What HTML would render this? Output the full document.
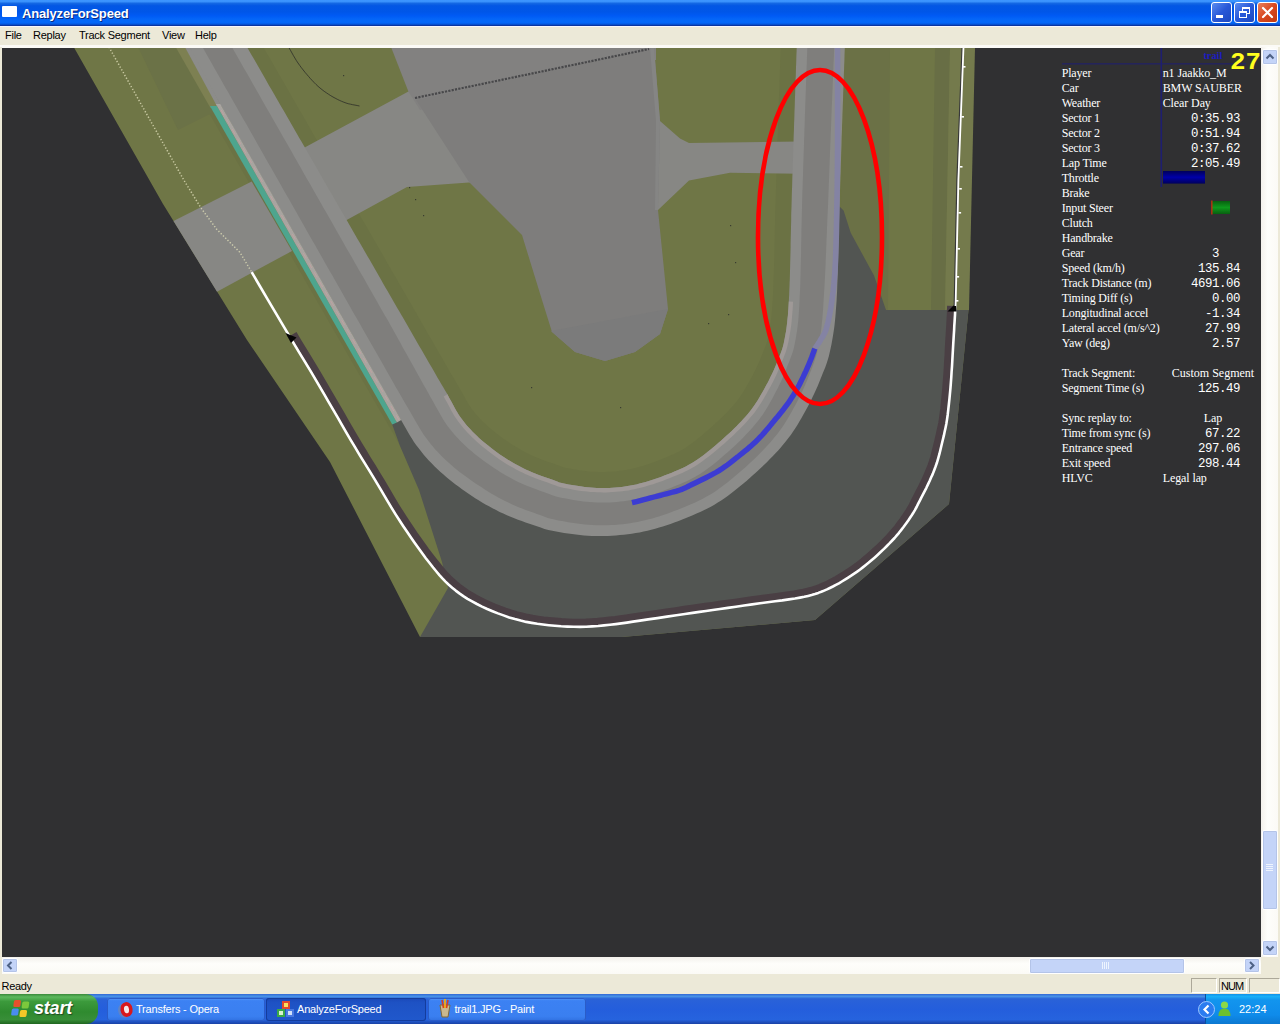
<!DOCTYPE html>
<html><head><meta charset="utf-8"><title>AnalyzeForSpeed</title>
<style>
html,body{margin:0;padding:0;}
body{width:1280px;height:1024px;overflow:hidden;background:#ece9d8;position:relative;font-family:"Liberation Sans",sans-serif;font-size:11px;color:#000;}
div,span{position:absolute;box-sizing:border-box;white-space:nowrap;}
#title{left:0;top:0;width:1280px;height:26px;background:linear-gradient(to bottom,#3d96ff 0%,#3a92fc 6%,#1468e4 13%,#0357e4 22%,#0056e8 45%,#005af4 60%,#0466f8 74%,#0468f8 86%,#0458e0 93%,#0a3aa8 97%,#0a2c94 100%);}
#ticon{left:2px;top:6px;width:15px;height:11px;background:#fff;border-radius:1px;}
#ttext{left:22px;top:5.5px;color:#fff;font-weight:bold;font-size:13px;letter-spacing:-0.17px;text-shadow:1px 1px 0 #0a2a80;}
.tb{top:2px;width:21px;height:21px;border:1px solid #fff;border-radius:3px;background:linear-gradient(135deg,#5a8cf0 0%,#2858d8 50%,#1c48c0 100%);}
#menu{left:0;top:26px;width:1280px;height:22px;background:#ece9d8;border-top:1px solid #f6f6fc;border-bottom:3px solid #fbfaf6;letter-spacing:-0.25px;}
#menu span{top:1.5px;font-size:11px;}
#scene{left:0;top:0;width:1280px;height:1024px;}
.lab{letter-spacing:-0.18px;left:1061.7px;color:#fff;font-family:"Liberation Serif",serif;font-size:12px;line-height:15px;}
.val{letter-spacing:-0.1px;left:1162.7px;color:#fff;font-family:"Liberation Serif",serif;font-size:12px;line-height:15px;}
.num{left:1140px;width:100px;text-align:right;color:#fff;font-family:"Liberation Mono",monospace;font-size:12.4px;letter-spacing:-0.44px;line-height:15px;margin-top:0.6px;}
.ctr{left:1162px;width:102px;text-align:center;color:#fff;font-family:"Liberation Serif",serif;font-size:12px;line-height:15px;}
#vs{left:1261px;top:47px;width:17px;height:910px;background:linear-gradient(to right,#f3f1ec,#fefefb 40%,#fbfaf6);}
#hs{left:2px;top:957px;width:1259px;height:17px;background:linear-gradient(to bottom,#f3f1ec,#fefefb 40%,#fbfaf6);}
.sb{background:#c4d4f8;border:1px solid #fff;border-radius:2px;box-shadow:0 0 0 1px #b4c4e8 inset;}
#status{left:0;top:975px;width:1280px;height:19px;background:#ece9d8;}
.pane{top:3px;height:15px;border:1px solid #aca899;border-right-color:#fff;border-bottom-color:#fff;}
#task{left:0;top:994px;width:1280px;height:30px;background:linear-gradient(to bottom,#3168d5 0%,#4993e6 8%,#2a62d8 16%,#245edc 50%,#2663de 85%,#1941a5 100%);}
.tbtn{letter-spacing:-0.2px;top:4px;height:23px;border-radius:3px;background:linear-gradient(to bottom,#5a9af8 0%,#3c81f3 12%,#3a7ff0 80%,#3070e0 100%);color:#fff;font-size:11px;box-shadow:0 0 0 1px #2a5cc8 inset;}
.tbtn span{top:5px;}
#start{left:0;top:0;width:98px;height:30px;border-radius:0 12px 12px 0;background:linear-gradient(to bottom,#3a8a3a 0%,#5cb85c 10%,#3c9a3c 25%,#2f8a2f 60%,#388e38 85%,#1f661f 100%);}
#start span{left:34px;top:3.5px;color:#fff;font-style:italic;font-weight:bold;font-size:18px;letter-spacing:-0.2px;text-shadow:1px 1px 1px #204a20;}
#tray{left:1205px;top:0;width:75px;height:30px;background:linear-gradient(to bottom,#1290e8 0%,#19b0f8 8%,#1295ee 20%,#0f8bea 70%,#0c78d0 100%);border-left:1px solid #0a50a0;}
</style></head><body>
<div id="scene"><svg width="1280" height="1024" viewBox="0 0 1280 1024" style="position:absolute;left:0;top:0">
<defs><linearGradient id="gth" x1="0" y1="0" x2="0" y2="1"><stop offset="0" stop-color="#00005c"/><stop offset="0.5" stop-color="#0000a8"/><stop offset="1" stop-color="#00005c"/></linearGradient><linearGradient id="ggr" x1="0" y1="0" x2="0" y2="1"><stop offset="0" stop-color="#086010"/><stop offset="0.5" stop-color="#0e9a1c"/><stop offset="1" stop-color="#086010"/></linearGradient><clipPath id="vc"><rect x="2" y="47.5" width="1259" height="909.5"/></clipPath></defs>
<g clip-path="url(#vc)">
<rect x="0" y="40" width="1270" height="925" fill="#303032"/>
<polygon points="73.7,47.0 974.0,47.0 968.5,310.0 949.0,504.0 815.0,620.0 622.0,637.0 420.0,637.0 330.0,462.0 247.0,340.0 163.0,204.0" fill="#6f7646" />
<path d="M187.4 -4.9 L189.3 -1.4 L191.3 2.0 L193.3 5.5 L195.4 9.0 L197.4 12.5 L199.4 15.9 L201.4 19.4 L203.4 22.9 L205.3 26.4 L207.3 29.8 L209.3 33.3 L211.3 36.8 L213.3 40.3 L215.3 43.7 L217.3 47.2 L219.3 50.7 L221.3 54.1 L223.3 57.6 L225.3 61.1 L227.3 64.5 L229.2 68.0 L231.2 71.5 L233.2 75.0 L235.2 78.4 L237.2 81.9 L239.2 85.4 L241.2 88.8 L243.2 92.3 L245.2 95.8 L247.2 99.2 L249.2 102.7 L251.2 106.2 L253.1 109.6 L255.1 113.1 L257.1 116.6 L259.1 120.0 L261.1 123.5 L263.1 127.0 L265.1 130.5 L267.1 133.9 L269.1 137.4 L271.1 140.9 L273.1 144.3 L275.1 147.8 L277.0 151.3 L279.0 154.7 L281.0 158.2 L283.0 161.7 L285.0 165.1 L287.0 168.6 L289.0 172.1 L291.0 175.6 L293.0 179.0 L295.0 182.5 L297.0 186.0 L298.9 189.4 L300.9 192.9 L302.9 196.4 L304.9 199.8 L306.9 203.3 L308.9 206.8 L310.9 210.2 L312.9 213.7 L314.9 217.2 L316.9 220.6 L318.9 224.1 L320.9 227.6 L322.9 231.0 L324.8 234.5 L326.8 238.0 L328.8 241.5 L330.8 244.9 L332.8 248.4 L334.8 251.9 L336.8 255.3 L338.8 258.8 L340.8 262.3 L342.8 265.7 L344.8 269.2 L346.8 272.7 L348.8 276.1 L350.7 279.6 L352.7 283.1 L354.7 286.5 L356.7 290.0 L358.7 293.5 L360.7 296.9 L362.7 300.4 L364.7 303.9 L366.7 307.3 L368.7 310.8 L370.7 314.3 L372.7 317.7 L374.7 321.2 L376.7 324.7 L378.7 328.2 L380.7 331.6 L382.7 335.1 L384.7 338.6 L386.7 342.1 L388.7 345.5 L390.6 349.0 L392.6 352.5 L394.6 356.0 L396.6 359.4 L398.6 362.9 L400.6 366.4 L402.6 369.8 L404.6 373.3 L406.6 376.7 L408.5 380.2 L410.5 383.7 L412.5 387.1 L414.5 390.6 L416.5 394.0 L418.5 397.4 L420.5 400.8 L422.5 404.2 L424.5 407.7 L426.5 411.2 L428.5 414.7 L430.4 418.2 L432.3 421.5 L434.0 424.5 L435.6 427.1 L437.3 429.6 L439.2 432.3 L441.3 435.0 L443.4 437.7 L445.6 440.3 L447.8 442.9 L450.1 445.4 L452.5 447.9 L454.9 450.3 L457.4 452.7 L460.0 455.1 L462.6 457.4 L465.3 459.7 L468.1 462.0 L470.9 464.2 L473.8 466.5 L476.7 468.7 L479.7 470.9 L482.7 473.0 L485.7 475.1 L488.7 477.1 L491.7 479.0 L494.8 480.9 L497.9 482.7 L501.0 484.5 L504.1 486.3 L507.3 488.0 L510.5 489.6 L513.7 491.2 L516.9 492.6 L519.9 494.0 L523.2 495.3 L526.6 496.6 L530.0 497.9 L533.6 499.1 L537.3 500.4 L541.1 501.7 L545.1 503.2 L549.0 504.6 L551.6 505.6 L553.8 506.2 L557.0 506.9 L560.6 507.6 L564.3 508.3 L568.0 508.9 L571.7 509.6 L575.3 510.1 L578.8 510.6 L582.3 511.0 L585.7 511.4 L589.3 511.6 L592.8 511.8 L596.4 512.0 L599.9 512.0 L603.5 512.0 L607.0 512.0 L610.6 511.8 L614.1 511.6 L617.8 511.3 L621.3 511.0 L624.8 510.6 L628.2 510.2 L631.7 509.6 L635.1 509.0 L638.4 508.3 L641.9 507.5 L645.4 506.7 L648.9 505.7 L652.4 504.8 L655.8 503.7 L659.3 502.6 L662.7 501.5 L666.1 500.3 L669.5 499.0 L673.0 497.7 L676.6 496.2 L680.2 494.8 L683.6 493.4 L687.0 491.9 L690.3 490.5 L693.5 489.0 L696.6 487.5 L699.6 485.9 L702.5 484.3 L705.3 482.6 L708.1 480.8 L710.9 478.9 L713.8 476.8 L716.7 474.7 L719.6 472.5 L722.5 470.2 L725.3 467.9 L728.2 465.5 L731.1 463.0 L734.0 460.5 L736.8 458.0 L739.7 455.5 L742.5 452.9 L745.3 450.4 L748.0 447.8 L750.6 445.3 L753.2 442.7 L755.8 440.0 L758.3 437.4 L760.7 434.7 L763.1 432.1 L765.4 429.4 L767.6 426.6 L769.8 423.9 L771.8 421.2 L773.7 418.5 L775.6 415.6 L777.5 412.7 L779.3 409.6 L781.2 406.4 L783.0 403.1 L784.9 399.8 L786.8 396.4 L788.5 393.2 L790.1 390.0 L791.7 386.7 L793.3 383.5 L794.8 380.1 L796.3 376.8 L797.7 373.3 L799.2 369.7 L800.7 366.0 L802.1 362.4 L803.4 359.1 L804.5 356.0 L805.4 353.0 L806.2 350.0 L807.0 346.8 L807.7 343.4 L808.4 339.7 L809.0 336.1 L809.6 332.5 L810.2 328.9 L810.6 325.3 L811.1 321.7 L811.4 318.0 L811.8 314.3 L812.1 310.6 L812.3 306.8 L812.6 303.0 L812.8 299.1 L813.0 295.3 L813.2 291.4 L813.3 287.6 L813.5 283.7 L813.6 279.7 L813.8 275.8 L813.9 271.8 L814.0 267.9 L814.1 263.9 L814.2 260.0 L814.3 256.0 L814.4 252.0 L814.5 248.0 L814.6 244.0 L814.7 240.0 L814.7 236.0 L814.8 232.0 L814.9 228.0 L815.0 224.0 L815.1 220.0 L815.2 215.9 L815.3 211.9 L815.4 207.9 L815.6 203.9 L815.7 199.8 L815.8 195.8 L815.9 191.8 L816.1 187.8 L816.2 183.8 L816.3 179.8 L816.4 175.8 L816.6 171.8 L816.7 167.8 L816.8 163.8 L817.0 159.8 L817.1 155.8 L817.2 151.8 L817.3 147.8 L817.5 143.8 L817.6 139.8 L817.7 135.8 L817.9 131.8 L818.0 127.8 L818.1 123.8 L818.3 119.8 L818.4 115.8 L818.5 111.8 L818.7 107.8 L818.8 103.8 L818.9 99.8 L819.1 95.8 L819.2 91.8 L819.4 87.8 L819.5 83.8 L819.6 79.8 L819.8 75.8 L819.9 71.8 L820.1 67.8 L820.2 63.8 L820.3 59.9 L820.5 55.9 L820.6 51.9 L820.7 47.9 L820.9 43.9 L821.0 39.9 L821.1 36.0 L821.2 32.0 L821.4 28.0 L821.5 24.0 L821.6 20.0 L821.7 16.0 L821.8 12.0 L821.9 8.0" fill="none" stroke="#6b7244" stroke-width="80" stroke-linejoin="round"/>
<polygon points="844.0,47.0 890.0,47.0 888.0,310.0 840.0,310.0" fill="#6b7146" />
<polygon points="935.0,47.0 950.0,47.0 945.0,310.0 931.0,310.0" fill="#686e45" />
<polygon points="950.0,47.0 975.0,47.0 969.0,310.0 945.0,310.0" fill="#747a4c" />
<polygon points="138.0,47.0 176.0,47.0 214.0,112.0 178.0,130.0" fill="#6b7247" />
<polygon points="175.6,47.0 185.0,47.0 217.5,105.0 210.5,108.0" fill="#7d8052" />
<polygon points="173.5,221.0 251.7,181.6 292.0,251.0 217.0,291.7" fill="#878784" />
<polygon points="300.0,150.0 408.4,91.6 430.0,96.0 485.0,185.0 469.0,182.5 407.0,187.0 343.0,222.0" fill="#878784" />
<polygon points="391.0,47.0 656.0,47.0 656.0,60.0 420.0,110.0 408.4,91.6" fill="#828180" />
<polygon points="656.0,118.0 660.0,121.0 680.0,138.4 689.0,143.0 800.0,141.5 800.0,173.8 730.0,172.8 689.0,180.6 658.0,210.0 655.0,200.0" fill="#878784" />
<polygon points="416.0,100.0 649.0,49.0 654.0,47.0 660.0,121.0 658.0,210.0 668.0,309.0 660.0,334.0 635.0,352.0 605.0,361.0 575.0,352.0 552.0,332.0 542.0,300.0 522.0,235.0 469.0,182.0" fill="#7e7d7c" />
<polygon points="654.0,47.0 660.0,121.0 658.0,210.0 655.0,210.0 656.0,121.0 650.0,48.5" fill="#858584" />
<polygon points="551.0,331.0 668.0,309.0 660.0,334.0 635.0,352.0 605.0,361.0 575.0,352.0" fill="#7b7b7b" />
<polygon points="392.0,424.0 400.0,446.0 419.0,490.0 442.0,562.0 448.0,588.0 420.0,637.0 622.0,637.0 815.0,620.0 949.0,504.0 968.5,310.0 886.0,310.0 874.0,275.5 850.7,232.8 843.6,210.5 839.5,206.4 825.0,206.0 820.0,300.0 800.0,380.0 745.0,450.0 660.0,505.0 600.0,512.0 540.0,505.0 480.0,480.0 445.0,445.0 418.0,410.0" fill="#525552" />
<polygon points="165.0,8.0 167.0,11.5 169.0,14.9 171.0,18.4 173.0,21.9 175.0,25.3 177.0,28.8 179.0,32.3 181.0,35.7 183.0,39.2 184.9,42.7 186.9,46.1 188.9,49.6 190.9,53.1 192.9,56.6 194.9,60.0 196.9,63.5 198.9,67.0 200.8,70.4 202.8,73.9 204.8,77.4 206.8,80.9 208.8,84.3 210.8,87.8 212.8,91.3 214.8,94.7 216.7,98.2 218.7,101.7 220.7,105.2 222.7,108.6 224.7,112.1 226.7,115.6 228.7,119.0 230.7,122.5 232.6,126.0 234.6,129.5 236.6,132.9 238.6,136.4 240.6,139.9 242.6,143.3 244.6,146.8 246.6,150.3 248.5,153.8 250.5,157.2 252.5,160.7 254.5,164.2 256.5,167.6 258.5,171.1 260.5,174.6 262.4,178.1 264.4,181.5 266.4,185.0 268.4,188.5 270.4,191.9 272.4,195.4 274.4,198.9 276.4,202.4 278.3,205.8 280.3,209.3 282.3,212.8 284.3,216.2 286.3,219.7 288.3,223.2 290.3,226.7 292.3,230.1 294.2,233.6 296.2,237.1 298.2,240.5 300.2,244.0 302.2,247.5 304.2,251.0 306.2,254.4 308.2,257.9 310.1,261.4 312.1,264.8 314.1,268.3 316.1,271.8 318.1,275.3 320.1,278.7 322.1,282.2 324.1,285.7 326.1,289.1 328.0,292.6 330.0,296.1 332.0,299.5 334.0,303.0 336.0,306.5 338.0,310.0 340.0,313.4 342.0,316.9 344.0,320.4 345.9,323.8 347.9,327.3 349.9,330.8 351.9,334.3 353.9,337.7 355.9,341.2 357.9,344.7 359.9,348.1 361.8,351.6 363.8,355.1 365.8,358.6 367.8,362.0 369.8,365.5 371.7,369.0 373.7,372.5 375.7,375.9 377.7,379.4 379.7,382.9 381.6,386.4 383.6,389.8 385.6,393.3 387.6,396.8 389.6,400.3 391.6,403.7 393.6,407.2 395.6,410.7 397.6,414.1 399.6,417.6 401.6,421.0 403.6,424.5 405.6,427.9 407.6,431.4 409.6,434.9 411.7,438.3 413.8,441.7 416.1,444.9 418.5,448.1 421.0,451.3 423.5,454.4 426.1,457.4 428.8,460.4 431.6,463.3 434.4,466.2 437.3,468.9 440.2,471.7 443.2,474.3 446.2,476.9 449.3,479.5 452.4,482.0 455.6,484.4 458.8,486.8 462.0,489.2 465.3,491.5 468.6,493.7 471.9,496.0 475.2,498.2 478.6,500.3 482.1,502.4 485.5,504.4 489.0,506.3 492.5,508.2 496.1,510.1 499.6,511.9 503.3,513.6 506.9,515.2 510.6,516.8 514.3,518.3 518.0,519.7 521.8,521.0 525.6,522.4 529.4,523.7 533.2,524.9 536.9,526.2 540.7,527.6 544.5,528.9 548.3,529.9 552.3,530.7 556.2,531.5 560.1,532.2 564.1,532.9 568.0,533.5 572.0,534.1 575.9,534.6 579.9,535.1 583.9,535.4 587.9,535.7 591.9,535.9 595.9,536.0 599.9,536.0 603.9,536.0 607.9,535.9 611.9,535.7 615.9,535.5 619.8,535.1 623.8,534.8 627.8,534.3 631.8,533.8 635.7,533.1 639.6,532.4 643.6,531.6 647.5,530.7 651.3,529.7 655.2,528.7 659.1,527.6 662.9,526.4 666.7,525.2 670.5,523.9 674.3,522.6 678.0,521.2 681.7,519.7 685.4,518.2 689.1,516.7 692.8,515.2 696.5,513.6 700.2,512.0 703.8,510.3 707.4,508.5 710.9,506.7 714.4,504.7 717.8,502.6 721.2,500.5 724.5,498.2 727.7,495.9 730.9,493.5 734.1,491.0 737.2,488.5 740.3,486.0 743.4,483.5 746.5,480.9 749.5,478.2 752.5,475.6 755.4,472.9 758.4,470.2 761.3,467.5 764.2,464.8 767.1,462.0 769.9,459.1 772.7,456.3 775.5,453.3 778.2,450.4 780.8,447.4 783.4,444.3 785.9,441.3 788.4,438.1 790.8,434.9 793.1,431.6 795.3,428.3 797.4,424.9 799.4,421.5 801.5,418.0 803.4,414.5 805.4,411.0 807.3,407.5 809.2,404.0 811.0,400.4 812.7,396.8 814.4,393.2 816.1,389.6 817.7,385.9 819.2,382.2 820.7,378.5 822.2,374.8 823.7,371.1 825.2,367.4 826.6,363.6 827.8,359.8 828.9,355.9 829.8,352.1 830.7,348.1 831.5,344.2 832.2,340.3 832.9,336.3 833.5,332.4 834.1,328.4 834.6,324.5 835.0,320.5 835.4,316.5 835.7,312.5 836.0,308.5 836.3,304.5 836.6,300.6 836.8,296.6 837.0,292.6 837.2,288.6 837.3,284.6 837.5,280.6 837.6,276.6 837.8,272.6 837.9,268.6 838.0,264.6 838.1,260.6 838.2,256.6 838.3,252.6 838.4,248.6 838.5,244.6 838.6,240.6 838.7,236.6 838.8,232.6 838.9,228.6 839.0,224.6 839.1,220.6 839.2,216.6 839.3,212.6 839.4,208.6 839.5,204.6 839.7,200.6 839.8,196.6 839.9,192.6 840.1,188.6 840.2,184.6 840.3,180.6 840.4,176.6 840.6,172.6 840.7,168.6 840.8,164.6 841.0,160.6 841.1,156.6 841.2,152.6 841.4,148.6 841.5,144.6 841.6,140.6 841.7,136.6 841.9,132.6 842.0,128.6 842.1,124.6 842.3,120.6 842.4,116.7 842.5,112.7 842.7,108.7 842.8,104.7 843.0,100.7 843.1,96.7 843.2,92.7 843.4,88.7 843.5,84.7 843.7,80.7 843.8,76.7 843.9,72.7 844.1,68.7 844.2,64.7 844.4,60.7 844.5,56.7 844.6,52.7 844.8,48.7 844.9,44.7 845.0,40.7 845.2,36.7 845.3,32.7 845.4,28.7 845.5,24.7 845.6,20.7 845.7,16.7 845.9,12.7 846.0,8.7 797.9,7.3 797.8,11.3 797.7,15.3 797.6,19.3 797.4,23.3 797.3,27.3 797.2,31.3 797.1,35.2 797.0,39.2 796.8,43.1 796.7,47.1 796.6,51.1 796.4,55.0 796.3,59.0 796.2,63.0 796.0,67.0 795.9,71.0 795.8,75.0 795.6,79.0 795.5,83.0 795.3,87.0 795.2,91.0 795.1,95.0 794.9,99.0 794.8,103.0 794.7,107.0 794.5,111.0 794.4,115.0 794.3,119.0 794.1,123.0 794.0,127.0 793.9,131.0 793.7,135.1 793.6,139.1 793.5,143.1 793.3,147.1 793.2,151.1 793.1,155.1 793.0,159.1 792.8,163.1 792.7,167.1 792.6,171.1 792.4,175.1 792.3,179.1 792.2,183.1 792.1,187.1 791.9,191.1 791.8,195.1 791.7,199.1 791.6,203.1 791.5,207.2 791.3,211.2 791.2,215.3 791.2,219.3 791.1,223.4 791.0,227.4 790.9,231.4 790.8,235.4 790.7,239.4 790.6,243.4 790.6,247.4 790.5,251.4 790.4,255.4 790.3,259.3 790.2,263.3 790.1,267.2 790.0,271.1 789.9,275.0 789.8,278.9 789.6,282.7 789.5,286.5 789.3,290.3 789.2,294.1 789.0,297.7 788.8,301.4 788.6,305.0 788.4,308.6 788.1,312.1 787.9,315.6 787.5,319.0 787.2,322.3 786.8,325.5 786.4,328.7 785.9,331.9 785.3,335.2 784.7,338.6 784.1,341.6 783.6,344.0 783.0,346.2 782.4,348.4 781.5,350.9 780.5,353.8 779.1,357.2 777.6,361.0 776.2,364.5 774.9,367.6 773.5,370.7 772.1,373.7 770.7,376.6 769.3,379.5 767.8,382.4 766.2,385.3 764.5,388.5 762.7,391.8 760.9,394.8 759.2,397.7 757.6,400.4 755.9,403.0 754.4,405.3 752.8,407.6 751.2,409.8 749.4,412.0 747.4,414.4 745.4,416.7 743.3,419.1 741.1,421.5 738.8,423.8 736.5,426.2 734.1,428.6 731.7,430.9 729.2,433.3 726.6,435.6 723.9,438.0 721.2,440.5 718.5,442.8 715.7,445.2 713.0,447.5 710.3,449.7 707.7,451.8 705.0,453.9 702.4,455.9 699.9,457.8 697.4,459.5 695.1,461.1 692.8,462.5 690.6,463.8 688.3,465.1 685.8,466.4 683.2,467.7 680.4,469.0 677.5,470.3 674.4,471.5 671.2,472.9 667.8,474.2 664.3,475.6 660.9,476.9 657.9,478.0 654.9,479.1 651.9,480.1 648.8,481.0 645.7,481.9 642.6,482.8 639.5,483.6 636.4,484.4 633.3,485.0 630.5,485.6 627.6,486.1 624.7,486.6 621.8,486.9 618.8,487.3 615.7,487.6 612.4,487.8 609.2,488.0 606.1,488.1 603.1,488.1 600.0,488.0 596.9,488.0 593.8,487.8 590.6,487.6 587.6,487.3 584.7,487.0 581.8,486.6 578.6,486.1 575.3,485.6 572.0,485.0 568.5,484.4 565.1,483.7 561.8,483.0 559.3,482.4 558.7,482.2 557.2,481.6 553.3,480.1 549.0,478.6 545.2,477.2 541.6,475.9 538.2,474.7 535.1,473.5 532.0,472.3 529.3,471.1 526.8,470.0 524.2,468.7 521.4,467.3 518.6,465.8 515.7,464.3 513.0,462.7 510.2,461.1 507.5,459.5 504.9,457.8 502.2,456.0 499.5,454.2 496.8,452.2 494.1,450.2 491.5,448.2 488.8,446.1 486.2,444.1 483.7,442.0 481.3,439.9 479.0,437.9 476.8,435.8 474.7,433.8 472.6,431.7 470.6,429.6 468.7,427.5 466.8,425.4 465.0,423.2 463.3,421.0 461.6,418.8 459.9,416.4 458.4,414.3 457.4,412.6 456.3,410.8 454.9,408.2 453.2,405.0 451.3,401.5 449.3,397.9 447.4,394.3 445.4,390.9 443.4,387.5 441.4,384.2 439.4,380.8 437.4,377.4 435.5,374.0 433.5,370.5 431.5,367.1 429.5,363.7 427.5,360.2 425.5,356.8 423.5,353.3 421.5,349.8 419.5,346.4 417.5,342.9 415.5,339.4 413.5,336.0 411.5,332.5 409.5,329.0 407.5,325.6 405.5,322.1 403.5,318.6 401.4,315.1 399.4,311.6 397.4,308.2 395.4,304.7 393.4,301.2 391.4,297.8 389.4,294.3 387.4,290.8 385.4,287.4 383.4,283.9 381.5,280.4 379.5,277.0 377.5,273.5 375.5,270.0 373.5,266.6 371.5,263.1 369.5,259.6 367.5,256.2 365.5,252.7 363.5,249.3 361.5,245.8 359.5,242.3 357.5,238.9 355.5,235.4 353.5,231.9 351.5,228.5 349.5,225.0 347.5,221.5 345.5,218.1 343.5,214.6 341.5,211.2 339.5,207.7 337.5,204.2 335.5,200.8 333.5,197.3 331.5,193.8 329.5,190.4 327.5,186.9 325.5,183.4 323.5,180.0 321.5,176.5 319.5,173.0 317.6,169.6 315.6,166.1 313.6,162.6 311.6,159.2 309.6,155.7 307.6,152.2 305.6,148.8 303.6,145.3 301.6,141.8 299.6,138.4 297.6,134.9 295.6,131.4 293.6,128.0 291.6,124.5 289.6,121.0 287.6,117.6 285.6,114.1 283.6,110.6 281.6,107.2 279.6,103.7 277.6,100.2 275.6,96.8 273.6,93.3 271.6,89.8 269.6,86.4 267.6,82.9 265.7,79.4 263.7,76.0 261.7,72.5 259.7,69.0 257.7,65.6 255.7,62.1 253.7,58.6 251.7,55.2 249.7,51.7 247.7,48.2 245.7,44.8 243.7,41.3 241.7,37.8 239.7,34.4 237.7,30.9 235.7,27.4 233.7,24.0 231.7,20.5 229.7,17.0 227.7,13.5 225.7,10.1 223.7,6.6 221.7,3.1 219.7,-0.4 217.7,-3.9 215.7,-7.4 213.7,-10.9 211.7,-14.3 209.7,-17.7" fill="#8c8c8a" />
<polygon points="443.7,396.5 445.6,400.0 447.6,403.6 449.5,407.1 451.2,410.4 452.7,413.0 453.8,415.0 454.9,416.8 456.5,419.0 458.2,421.5 460.0,423.8 461.8,426.1 463.6,428.3 465.6,430.5 467.6,432.7 469.7,434.8 471.8,437.0 474.0,439.1 476.3,441.2 478.6,443.3 481.1,445.4 483.6,447.5 486.3,449.6 489.0,451.7 491.7,453.8 494.4,455.8 497.1,457.7 499.9,459.7 502.6,461.4 505.3,463.2 508.1,464.9 510.9,466.5 513.7,468.1 516.6,469.7 519.5,471.2 522.4,472.6 525.1,473.9 527.7,475.1 530.5,476.3 533.6,477.5 536.8,478.7 540.2,480.0 543.8,481.3 547.6,482.6 551.9,484.2 555.8,485.6 557.4,486.3 558.3,486.6 560.9,487.2 564.3,487.9 567.8,488.6 571.3,489.2 574.7,489.9 578.0,490.4 581.2,490.9 584.2,491.3 587.2,491.6 590.4,491.9 593.6,492.1 596.8,492.2 600.0,492.3 603.1,492.4 606.3,492.4 609.5,492.3 612.7,492.1 616.1,491.8 619.2,491.6 622.4,491.2 625.4,490.8 628.3,490.4 631.3,489.8 634.3,489.2 637.4,488.5 640.6,487.8 643.8,486.9 646.9,486.1 650.0,485.1 653.2,484.2 656.3,483.1 659.4,482.1 662.5,480.9 665.9,479.6 669.4,478.2 672.8,476.8 676.1,475.5 679.2,474.2 682.2,472.9 685.1,471.6 687.8,470.2 690.3,468.9 692.8,467.6 695.1,466.2 697.4,464.7 699.9,463.0 702.4,461.3 705.0,459.3 707.7,457.3 710.4,455.2 713.1,453.0 715.8,450.7 718.5,448.4 721.3,446.1 724.1,443.7 726.8,441.2 729.5,438.8 732.1,436.4 734.7,434.0 737.1,431.6 739.6,429.2 741.9,426.8 744.2,424.4 746.5,421.9 748.6,419.5 750.7,417.1 752.7,414.7 754.6,412.4 756.3,410.1 757.9,407.8 759.5,405.3 761.2,402.7 762.9,399.9 764.6,397.0 766.4,393.9 768.2,390.6 770.0,387.4 771.7,384.3 773.2,381.4 774.6,378.5 776.1,375.5 777.4,372.5 778.8,369.3 780.2,366.1 781.6,362.6 783.1,358.9 784.4,355.4 785.6,352.4 786.4,349.8 787.1,347.4 787.7,345.1 788.3,342.5 788.9,339.5 789.5,336.0 790.1,332.6 790.6,329.4 791.1,326.1 791.5,322.8 791.8,319.5 792.1,316.0 792.4,312.5 792.7,309.0 792.9,305.3 793.1,301.7 788.8,301.4 788.6,305.0 788.4,308.6 788.1,312.1 787.9,315.6 787.5,319.0 787.2,322.3 786.8,325.5 786.4,328.7 785.9,331.9 785.3,335.2 784.7,338.6 784.1,341.6 783.6,344.0 783.0,346.2 782.4,348.4 781.5,350.9 780.5,353.8 779.1,357.2 777.6,361.0 776.2,364.5 774.9,367.6 773.5,370.7 772.1,373.7 770.7,376.6 769.3,379.5 767.8,382.4 766.2,385.3 764.5,388.5 762.7,391.8 760.9,394.8 759.2,397.7 757.6,400.4 755.9,403.0 754.4,405.3 752.8,407.6 751.2,409.8 749.4,412.0 747.4,414.4 745.4,416.7 743.3,419.1 741.1,421.5 738.8,423.8 736.5,426.2 734.1,428.6 731.7,430.9 729.2,433.3 726.6,435.6 723.9,438.0 721.2,440.5 718.5,442.8 715.7,445.2 713.0,447.5 710.3,449.7 707.7,451.8 705.0,453.9 702.4,455.9 699.9,457.8 697.4,459.5 695.1,461.1 692.8,462.5 690.6,463.8 688.3,465.1 685.8,466.4 683.2,467.7 680.4,469.0 677.5,470.3 674.4,471.5 671.2,472.9 667.8,474.2 664.3,475.6 660.9,476.9 657.9,478.0 654.9,479.1 651.9,480.1 648.8,481.0 645.7,481.9 642.6,482.8 639.5,483.6 636.4,484.4 633.3,485.0 630.5,485.6 627.6,486.1 624.7,486.6 621.8,486.9 618.8,487.3 615.7,487.6 612.4,487.8 609.2,488.0 606.1,488.1 603.1,488.1 600.0,488.0 596.9,488.0 593.8,487.8 590.6,487.6 587.6,487.3 584.7,487.0 581.8,486.6 578.6,486.1 575.3,485.6 572.0,485.0 568.5,484.4 565.1,483.7 561.8,483.0 559.3,482.4 558.7,482.2 557.2,481.6 553.3,480.1 549.0,478.6 545.2,477.2 541.6,475.9 538.2,474.7 535.1,473.5 532.0,472.3 529.3,471.1 526.8,470.0 524.2,468.7 521.4,467.3 518.6,465.8 515.7,464.3 513.0,462.7 510.2,461.1 507.5,459.5 504.9,457.8 502.2,456.0 499.5,454.2 496.8,452.2 494.1,450.2 491.5,448.2 488.8,446.1 486.2,444.1 483.7,442.0 481.3,439.9 479.0,437.9 476.8,435.8 474.7,433.8 472.6,431.7 470.6,429.6 468.7,427.5 466.8,425.4 465.0,423.2 463.3,421.0 461.6,418.8 459.9,416.4 458.4,414.3 457.4,412.6 456.3,410.8 454.9,408.2 453.2,405.0 451.3,401.5 449.3,397.9 447.4,394.3" fill="#9f9997" />
<polygon points="176.3,1.5 178.3,5.0 180.2,8.4 182.3,11.9 184.3,15.4 186.3,18.8 188.3,22.3 190.3,25.8 192.2,29.3 194.2,32.7 196.2,36.2 198.2,39.7 200.2,43.2 202.2,46.6 204.2,50.1 206.1,53.6 208.1,57.1 210.1,60.5 212.1,64.0 214.0,67.5 216.0,71.0 218.0,74.4 220.0,77.9 222.0,81.4 223.9,84.9 225.9,88.4 227.9,91.8 229.9,95.3 231.8,98.8 233.8,102.3 235.8,105.7 237.8,109.2 239.7,112.7 241.7,116.2 243.7,119.7 245.7,123.1 247.7,126.6 249.6,130.1 251.6,133.6 253.6,137.0 255.6,140.5 257.5,144.0 259.5,147.5 261.5,151.0 263.5,154.4 265.4,157.9 267.4,161.4 269.4,164.9 271.4,168.3 273.3,171.8 275.3,175.3 277.3,178.8 279.3,182.3 281.3,185.7 283.2,189.2 285.2,192.7 287.2,196.2 289.2,199.6 291.1,203.1 293.1,206.6 295.1,210.1 297.1,213.6 299.0,217.0 301.0,220.5 303.0,224.0 305.0,227.5 306.9,230.9 308.9,234.4 310.9,237.9 312.9,241.4 314.9,244.8 316.8,248.3 318.8,251.8 320.8,255.3 322.8,258.7 324.7,262.2 326.7,265.7 328.7,269.2 330.7,272.7 332.7,276.1 334.6,279.6 336.6,283.1 338.6,286.6 340.6,290.0 342.6,293.5 344.5,297.0 346.5,300.5 348.5,303.9 350.5,307.4 352.4,310.9 354.4,314.4 356.4,317.8 358.4,321.3 360.4,324.8 362.3,328.3 364.3,331.8 366.3,335.2 368.3,338.7 370.3,342.2 372.3,345.7 374.2,349.1 376.2,352.6 378.2,356.1 380.2,359.6 382.2,363.0 384.2,366.5 386.1,370.0 388.1,373.5 390.1,376.9 392.1,380.4 394.1,383.9 396.0,387.4 398.0,390.8 400.0,394.3 402.0,397.7 404.0,401.2 406.0,404.7 408.0,408.1 410.0,411.5 412.0,415.0 414.0,418.4 416.0,421.9 418.1,425.4 420.0,428.7 422.0,431.9 423.9,434.9 426.0,437.8 428.2,440.8 430.5,443.7 432.9,446.6 435.3,449.4 437.8,452.1 440.4,454.8 443.0,457.4 445.7,460.0 448.5,462.6 451.3,465.1 454.1,467.5 457.1,469.9 460.0,472.2 463.1,474.5 466.2,476.8 469.3,479.1 472.4,481.3 475.6,483.4 478.8,485.6 482.0,487.6 485.2,489.7 488.4,491.7 491.6,493.7 494.9,495.6 498.2,497.4 501.6,499.2 505.0,501.0 508.4,502.6 511.7,504.2 515.1,505.7 518.6,507.2 522.1,508.6 525.7,509.9 529.4,511.2 533.1,512.6 536.9,513.9 540.8,515.3 544.6,516.7 547.8,518.0 550.9,518.8 554.5,519.6 558.3,520.4 562.1,521.1 565.9,521.8 569.7,522.5 573.5,523.1 577.3,523.6 581.0,524.1 584.7,524.5 588.5,524.8 592.3,525.0 596.1,525.2 599.9,525.3 603.7,525.3 607.5,525.2 611.3,525.1 615.1,524.9 618.9,524.6 622.7,524.2 626.5,523.7 630.2,523.2 633.9,522.6 637.6,521.9 641.3,521.1 645.0,520.3 648.7,519.3 652.4,518.4 656.1,517.3 659.7,516.2 663.3,515.0 667.0,513.8 670.5,512.5 674.1,511.1 677.8,509.7 681.4,508.2 685.1,506.7 688.6,505.3 692.2,503.7 695.7,502.2 699.1,500.5 702.4,498.9 705.7,497.1 708.9,495.3 712.1,493.4 715.2,491.4 718.2,489.3 721.3,487.1 724.3,484.8 727.4,482.4 730.4,480.0 733.4,477.6 736.3,475.1 739.3,472.6 742.2,470.0 745.2,467.4 748.1,464.8 751.0,462.1 753.8,459.5 756.6,456.8 759.3,454.1 762.0,451.3 764.6,448.5 767.2,445.7 769.8,442.9 772.3,440.0 774.7,437.1 777.1,434.2 779.3,431.2 781.5,428.2 783.6,425.2 785.6,422.1 787.6,418.8 789.5,415.6 791.4,412.2 793.2,408.8 795.1,405.4 797.0,401.9 798.7,398.5 800.4,395.1 802.1,391.7 803.7,388.2 805.2,384.7 806.7,381.2 808.2,377.6 809.6,374.0 811.1,370.2 812.5,366.6 813.8,363.1 815.0,359.6 816.1,356.2 817.0,352.8 817.8,349.3 818.5,345.6 819.2,341.8 819.9,338.1 820.5,334.3 821.1,330.6 821.5,326.8 821.9,323.0 822.3,319.2 822.6,315.3 822.9,311.5 823.2,307.6 823.4,303.7 823.6,299.8 823.9,295.9 824.1,292.0 824.4,288.0 824.6,284.1 824.8,280.1 825.0,276.2 825.2,272.2 825.4,268.2 825.6,264.2 825.7,260.3 825.9,256.3 826.1,252.3 826.2,248.3 826.4,244.3 826.5,240.3 826.7,236.3 826.9,232.3 827.0,228.3 827.2,224.3 827.3,220.3 827.5,216.3 827.7,212.3 827.9,208.3 828.1,204.2 828.2,200.2 828.4,196.2 828.5,192.2 828.7,188.2 828.8,184.2 829.0,180.3 829.1,176.3 829.3,172.3 829.4,168.3 829.6,164.3 829.7,160.3 829.9,156.3 830.0,152.3 830.2,148.3 830.3,144.3 830.5,140.3 830.6,136.3 830.8,132.3 831.0,128.3 831.1,124.3 831.3,120.3 831.4,116.3 831.6,112.3 831.7,108.3 831.9,104.3 832.1,100.3 832.2,96.3 832.4,92.3 832.6,88.3 832.7,84.3 832.9,80.3 833.1,76.3 833.2,72.3 833.4,68.3 833.5,64.3 833.7,60.3 833.9,56.3 834.0,52.3 834.2,48.3 834.3,44.4 834.4,40.4 834.6,36.4 834.7,32.4 834.8,28.4 834.9,24.4 835.0,20.4 835.2,16.4 835.3,12.4 835.4,8.4 808.5,7.6 808.4,11.6 808.3,15.6 808.1,19.6 808.0,23.6 807.9,27.6 807.8,31.6 807.7,35.5 807.6,39.5 807.4,43.5 807.3,47.4 807.2,51.4 807.0,55.4 806.9,59.4 806.8,63.4 806.6,67.4 806.5,71.4 806.3,75.4 806.2,79.3 806.0,83.3 805.9,87.3 805.8,91.3 805.6,95.4 805.5,99.4 805.3,103.4 805.2,107.4 805.1,111.4 804.9,115.4 804.8,119.4 804.7,123.4 804.5,127.4 804.4,131.4 804.3,135.4 804.1,139.4 804.0,143.4 803.9,147.4 803.7,151.4 803.6,155.4 803.5,159.4 803.3,163.4 803.2,167.4 803.1,171.4 803.0,175.4 802.8,179.4 802.7,183.4 802.6,187.4 802.4,191.4 802.3,195.4 802.2,199.4 802.1,203.4 802.0,207.5 801.9,211.5 801.8,215.6 801.7,219.6 801.6,223.7 801.5,227.7 801.4,231.7 801.4,235.7 801.3,239.7 801.2,243.7 801.1,247.7 801.1,251.7 801.0,255.6 800.9,259.6 800.8,263.6 800.7,267.5 800.6,271.4 800.5,275.4 800.4,279.3 800.3,283.2 800.2,287.0 800.0,290.8 799.8,294.6 799.6,298.3 799.5,302.1 799.3,305.8 799.1,309.5 798.8,313.1 798.6,316.7 798.3,320.2 797.9,323.7 797.5,327.1 797.1,330.4 796.5,333.8 796.0,337.3 795.3,340.8 794.7,344.0 794.1,346.8 793.5,349.4 792.7,352.0 791.8,354.7 790.6,357.8 789.3,361.4 787.8,365.1 786.4,368.7 785.1,372.0 783.8,375.3 782.4,378.4 781.0,381.6 779.5,384.6 778.0,387.7 776.4,390.8 774.7,394.1 772.9,397.5 771.1,400.7 769.4,403.7 767.7,406.7 766.0,409.5 764.4,412.1 762.7,414.7 760.9,417.1 759.0,419.7 756.9,422.3 754.8,424.8 752.6,427.4 750.3,430.0 748.0,432.6 745.5,435.1 743.1,437.7 740.6,440.2 738.0,442.7 735.4,445.2 732.7,447.7 729.9,450.2 727.1,452.7 724.3,455.1 721.5,457.5 718.8,459.9 716.0,462.2 713.2,464.4 710.5,466.5 707.8,468.6 705.1,470.5 702.5,472.3 700.0,474.0 697.4,475.5 694.8,477.0 692.0,478.5 689.1,480.0 686.1,481.4 683.0,482.8 679.8,484.2 676.4,485.6 672.9,487.0 669.4,488.5 665.9,489.8 662.7,491.1 659.5,492.2 656.2,493.4 652.9,494.4 649.7,495.4 646.4,496.4 643.0,497.3 639.7,498.1 636.4,498.9 633.2,499.6 630.0,500.2 626.8,500.7 623.6,501.2 620.3,501.6 616.9,501.9 613.5,502.2 610.0,502.5 606.7,502.6 603.3,502.6 599.9,502.5 596.6,502.4 593.2,502.3 589.8,502.1 586.5,501.8 583.2,501.4 580.0,501.0 576.6,500.5 573.1,499.9 569.6,499.3 566.0,498.6 562.5,497.9 558.9,497.2 556.0,496.5 554.5,496.1 552.3,495.2 548.5,493.8 544.3,492.3 540.5,490.9 536.9,489.6 533.4,488.3 530.1,487.1 526.8,485.8 523.8,484.5 521.0,483.3 518.1,481.9 515.1,480.4 512.0,478.8 509.0,477.1 506.0,475.4 503.0,473.7 500.1,471.9 497.2,470.1 494.4,468.3 491.5,466.3 488.6,464.3 485.7,462.3 482.9,460.2 480.0,458.0 477.3,455.9 474.5,453.7 471.9,451.6 469.4,449.4 466.9,447.2 464.5,445.0 462.2,442.7 459.9,440.4 457.7,438.1 455.5,435.8 453.5,433.4 451.5,431.0 449.5,428.5 447.5,425.9 445.8,423.5 444.3,421.3 442.9,419.0 441.3,416.2 439.5,412.9 437.5,409.4 435.5,405.9 433.6,402.4 431.6,398.9 429.6,395.5 427.7,392.1 425.8,388.6 423.8,385.2 421.9,381.7 420.0,378.3 418.0,374.8 416.1,371.3 414.2,367.8 412.2,364.3 410.3,360.8 408.3,357.3 406.4,353.8 404.5,350.4 402.5,346.9 400.6,343.3 398.6,339.8 396.7,336.3 394.7,332.8 392.8,329.3 390.8,325.8 388.9,322.3 386.9,318.8 384.9,315.4 382.9,311.9 380.9,308.4 378.9,304.9 377.0,301.5 375.0,298.0 373.0,294.5 371.0,291.0 369.0,287.6 367.0,284.1 365.1,280.6 363.1,277.1 361.1,273.7 359.1,270.2 357.1,266.7 355.1,263.2 353.2,259.8 351.2,256.3 349.2,252.8 347.2,249.4 345.2,245.9 343.3,242.4 341.3,238.9 339.3,235.5 337.3,232.0 335.3,228.5 333.4,225.0 331.4,221.6 329.4,218.1 327.4,214.6 325.4,211.1 323.4,207.7 321.5,204.2 319.5,200.7 317.5,197.2 315.5,193.8 313.5,190.3 311.6,186.8 309.6,183.3 307.6,179.9 305.6,176.4 303.6,172.9 301.7,169.4 299.7,166.0 297.7,162.5 295.7,159.0 293.7,155.5 291.8,152.1 289.8,148.6 287.8,145.1 285.8,141.6 283.8,138.2 281.9,134.7 279.9,131.2 277.9,127.7 275.9,124.3 273.9,120.8 271.9,117.3 270.0,113.8 268.0,110.4 266.0,106.9 264.0,103.4 262.0,99.9 260.1,96.5 258.1,93.0 256.1,89.5 254.1,86.0 252.1,82.6 250.2,79.1 248.2,75.6 246.2,72.1 244.2,68.7 242.2,65.2 240.3,61.7 238.3,58.2 236.3,54.8 234.3,51.3 232.3,47.8 230.3,44.3 228.4,40.9 226.4,37.4 224.4,33.9 222.4,30.4 220.4,27.0 218.4,23.5 216.4,20.0 214.5,16.5 212.5,13.1 210.5,9.6 208.5,6.1 206.5,2.6 204.4,-0.9 202.4,-4.4 200.4,-7.8 198.5,-11.3" fill="#7f7e7c" />
<polygon points="184.3,46.0 189.0,46.0 221.4,106.0 216.9,106.0" fill="#8c8c8a" />
<polygon points="209.9,106.0 216.9,106.0 396.9,422.5 392.3,424.5" fill="#4ea58e" />
<polygon points="215.8,104.0 220.3,104.0 401.2,420.0 396.9,422.5" fill="#a8a4a0" />
<path d="M221.2 110.0 L399.0 420.0" fill="none" stroke="#c8a0a0" stroke-width="1" stroke-dasharray="6 5" opacity="0.8"/>
<path d="M293.4 333.9 L298.7 342.8 L303.2 350.2 L307.2 356.6 L311.1 363.0 L315.2 369.8 L319.6 377.3 L324.0 384.8 L328.3 392.3 L332.7 399.9 L337.1 407.4 L341.5 414.9 L345.8 422.5 L350.2 430.0 L354.6 437.5 L358.9 444.8 L363.4 452.2 L367.8 459.5 L372.3 466.7 L376.6 473.8 L380.8 480.7 L384.8 487.4 L388.6 493.8 L392.2 500.0 L395.8 506.0 L399.5 512.0 L403.2 517.8 L407.0 523.5 L410.7 529.1 L414.4 534.5 L418.2 539.8 L421.9 545.1 L425.7 550.4 L429.5 555.4 L433.2 560.2 L436.7 564.6 L439.9 568.5 L442.9 572.1 L445.8 575.3 L448.7 578.3 L451.9 581.3 L455.2 584.2 L458.6 587.0 L462.1 589.7 L465.8 592.3 L469.9 594.8 L474.3 597.4 L479.0 599.9 L484.0 602.4 L489.1 604.8 L494.3 607.0 L499.6 609.1 L505.0 611.1 L510.6 613.0 L516.2 614.7 L521.7 616.1 L527.1 617.4 L532.5 618.4 L537.9 619.2 L543.5 620.0 L549.2 620.6 L555.2 621.2 L561.4 621.7 L567.7 622.0 L573.9 622.3 L580.0 622.3 L585.9 622.2 L591.8 621.8 L597.7 621.4 L603.6 620.8 L609.5 620.2 L615.2 619.6 L620.6 618.8 L626.2 618.0 L632.4 617.1 L639.3 616.0 L647.5 614.9 L656.7 613.5 L666.3 612.1 L675.7 610.7 L684.3 609.4 L691.9 608.4 L698.8 607.4 L705.5 606.4 L712.2 605.5 L719.4 604.4 L727.1 603.3 L735.2 602.2 L743.5 601.0 L751.6 599.8 L759.4 598.7 L767.0 597.7 L774.5 596.7 L781.7 595.8 L788.4 594.9 L794.2 594.0 L799.2 593.1 L803.4 592.3 L807.0 591.4 L810.4 590.6 L813.7 589.6 L816.8 588.6 L819.7 587.5 L822.4 586.4 L825.1 585.2 L827.9 583.9 L830.8 582.4 L833.7 580.9 L836.6 579.3 L839.5 577.6 L842.4 575.8 L845.4 574.0 L848.3 572.1 L851.2 570.1 L854.1 568.1 L857.1 566.0 L860.0 563.8 L862.9 561.5 L865.8 559.0 L868.8 556.5 L871.7 554.0 L874.7 551.3 L877.8 548.5 L880.8 545.6 L883.7 542.8 L886.4 540.0 L888.9 537.4 L891.1 534.9 L893.3 532.4 L895.5 529.9 L897.7 527.1 L900.0 524.0 L902.4 520.8 L904.8 517.4 L907.0 514.1 L909.1 510.9 L910.9 507.9 L912.5 504.9 L914.0 501.8 L915.6 498.7 L917.2 495.5 L918.9 492.2 L920.6 489.0 L922.2 485.7 L923.9 482.5 L925.4 479.1 L926.9 475.7 L928.4 472.3 L929.8 468.8 L931.2 465.2 L932.5 461.4 L933.8 457.2 L935.0 452.5 L936.2 447.7 L937.4 443.0 L938.4 438.5 L939.4 434.4 L940.2 430.6 L941.0 427.0 L941.8 423.2 L942.5 418.9 L943.1 414.1 L943.8 408.9 L944.3 403.5 L944.9 398.0 L945.4 392.6 L945.9 387.3 L946.3 382.0 L946.7 376.7 L947.1 371.4 L947.4 366.1 L947.7 360.7 L948.1 355.3 L948.3 349.8 L948.6 344.6 L948.9 339.5 L949.2 334.7 L949.5 330.0 L949.8 325.5 L950.0 321.4 L950.2 317.8 L950.4 314.8 L950.5 312.3 L950.5 310.2 L950.6 308.1 L950.7 305.8" fill="none" stroke="#4a3f44" stroke-width="7.2" stroke-linejoin="round"/>
<path d="M251.7 272.2 L259.5 285.5 L267.5 299.2 L275.5 312.7 L282.9 325.2 L289.4 336.2 L294.8 345.2 L299.3 352.6 L303.3 359.1 L307.1 365.4 L311.2 372.2 L315.6 379.6 L320.0 387.1 L324.4 394.6 L328.7 402.2 L333.1 409.7 L337.5 417.2 L341.9 424.8 L346.2 432.3 L350.6 439.8 L355.0 447.2 L359.4 454.6 L363.9 461.9 L368.4 469.1 L372.7 476.2 L376.9 483.1 L380.8 489.7 L384.6 496.1 L388.3 502.3 L391.9 508.4 L395.6 514.4 L399.4 520.3 L403.1 526.0 L406.9 531.6 L410.6 537.1 L414.4 542.5 L418.2 547.8 L422.0 553.1 L425.8 558.2 L429.6 563.0 L433.1 567.5 L436.4 571.5 L439.4 575.1 L442.4 578.4 L445.5 581.6 L448.8 584.7 L452.2 587.7 L455.7 590.6 L459.4 593.4 L463.3 596.1 L467.5 598.8 L472.1 601.4 L476.9 604.0 L482.0 606.6 L487.2 609.0 L492.5 611.2 L497.9 613.4 L503.5 615.4 L509.2 617.4 L514.9 619.1 L520.6 620.6 L526.2 621.9 L531.7 622.9 L537.3 623.8 L542.9 624.5 L548.8 625.2 L554.8 625.8 L561.1 626.3 L567.4 626.6 L573.8 626.8 L580.0 626.9 L586.1 626.8 L592.1 626.4 L598.1 626.0 L604.0 625.4 L610.0 624.8 L615.8 624.1 L621.3 623.4 L626.9 622.6 L633.0 621.6 L640.0 620.6 L648.2 619.4 L657.4 618.1 L667.0 616.6 L676.4 615.3 L685.0 614.0 L692.6 612.9 L699.5 611.9 L706.1 611.0 L712.8 610.0 L720.0 609.0 L727.8 607.9 L735.9 606.7 L744.1 605.5 L752.2 604.4 L760.0 603.3 L767.6 602.3 L775.1 601.3 L782.3 600.4 L789.0 599.4 L795.0 598.5 L800.0 597.6 L804.3 596.8 L808.1 595.9 L811.6 595.0 L815.0 594.0 L818.3 592.9 L821.3 591.8 L824.2 590.6 L827.0 589.4 L829.9 588.0 L832.9 586.5 L835.9 584.9 L838.9 583.3 L841.9 581.5 L844.9 579.7 L847.8 577.8 L850.8 575.9 L853.8 573.9 L856.8 571.9 L859.8 569.7 L862.8 567.4 L865.8 565.0 L868.8 562.6 L871.8 560.0 L874.8 557.4 L877.8 554.7 L880.9 551.8 L884.0 548.9 L886.9 546.0 L889.7 543.2 L892.2 540.5 L894.6 538.0 L896.8 535.4 L899.0 532.8 L901.3 529.9 L903.7 526.8 L906.1 523.5 L908.6 520.0 L910.9 516.6 L913.0 513.3 L914.9 510.1 L916.6 507.0 L918.1 503.9 L919.7 500.8 L921.3 497.6 L923.0 494.4 L924.7 491.1 L926.4 487.8 L928.0 484.4 L929.6 481.0 L931.1 477.5 L932.7 474.1 L934.1 470.5 L935.5 466.8 L936.9 462.8 L938.2 458.4 L939.5 453.7 L940.7 448.8 L941.8 444.0 L942.9 439.5 L943.9 435.4 L944.7 431.6 L945.5 427.9 L946.3 424.0 L947.0 419.6 L947.7 414.7 L948.3 409.4 L948.9 404.0 L949.5 398.4 L950.0 393.0 L950.5 387.7 L950.9 382.4 L951.3 377.0 L951.6 371.7 L952.0 366.4 L952.3 361.0 L952.6 355.5 L952.9 350.1 L953.2 344.8 L953.5 339.8 L953.8 335.0 L954.1 330.3 L954.3 325.8 L954.6 321.7 L954.8 318.0 L955.0 315.0 L955.1 312.5 L955.1 310.3 L955.2 308.2 L955.3 306.0" fill="none" stroke="#ffffff" stroke-width="2.6" stroke-linejoin="round"/>
<polygon points="285.5,333.0 296.5,337.5 291.0,343.0" fill="#050505" />
<polygon points="947.5,311.5 956.0,303.0 956.5,311.5" fill="#050505" />
<path d="M962.2 47.0 L957.0 180.0 L954.3 306.0" fill="none" stroke="#38383a" stroke-width="1.4" />
<path d="M963.5 47.0 L958.4 180.0 L955.6 306.0" fill="none" stroke="#ffffff" stroke-width="1.8" />
<rect x="962.9" y="66" width="2.6" height="1.6" fill="#fff"/>
<rect x="961.4" y="116" width="2.6" height="1.6" fill="#fff"/>
<rect x="959.9" y="166" width="2.6" height="1.6" fill="#fff"/>
<rect x="959.2" y="188" width="2.6" height="1.6" fill="#fff"/>
<rect x="958.5" y="212" width="2.6" height="1.6" fill="#fff"/>
<rect x="957.4" y="248" width="2.6" height="1.6" fill="#fff"/>
<rect x="956.5" y="276" width="2.6" height="1.6" fill="#fff"/>
<rect x="955.8" y="300" width="2.6" height="1.6" fill="#fff"/>
<path d="M108.9 47.0 L183.8 180.0 L201.0 208.0 L216.5 229.0 L240.0 252.5 L251.7 272.2" fill="none" stroke="#deddb8" stroke-width="1.5" stroke-dasharray="1.3 1.9" opacity="0.8"/>
<path d="M415.0 98.0 L649.0 49.0" fill="none" stroke="#48484a" stroke-width="2.2" stroke-dasharray="2.2 1.2"/>
<path d="M289.0 47.8 L290.5 50.4 L291.9 52.9 L293.4 55.5 L294.9 58.1 L296.4 60.6 L298.0 63.0 L299.7 65.4 L301.4 67.7 L303.2 70.0 L305.0 72.3 L306.9 74.5 L308.7 76.6 L310.5 78.7 L312.4 80.7 L314.2 82.6 L316.1 84.5 L318.0 86.3 L320.0 88.0 L322.1 89.7 L324.2 91.3 L326.4 92.8 L328.6 94.3 L330.8 95.7 L333.0 97.0 L335.2 98.2 L337.3 99.3 L339.5 100.4 L341.6 101.3 L343.8 102.2 L346.0 103.0 L348.2 103.7 L350.5 104.2 L352.7 104.7 L355.0 105.1 L357.2 105.5 L359.5 106.0" fill="none" stroke="#2a2c28" stroke-width="0.9" opacity="0.85"/>
<rect x="343" y="75" width="1.2" height="1.2" fill="#3a3c30"/>
<rect x="409" y="187" width="1.2" height="1.2" fill="#3a3c30"/>
<rect x="415" y="199" width="1.2" height="1.2" fill="#3a3c30"/>
<rect x="423" y="215" width="1.2" height="1.2" fill="#3a3c30"/>
<rect x="599" y="43" width="1.2" height="1.2" fill="#3a3c30"/>
<rect x="730" y="225" width="1.2" height="1.2" fill="#3a3c30"/>
<rect x="735" y="262" width="1.2" height="1.2" fill="#3a3c30"/>
<rect x="728" y="314" width="1.2" height="1.2" fill="#3a3c30"/>
<rect x="531" y="387" width="1.2" height="1.2" fill="#3a3c30"/>
<rect x="620" y="407" width="1.2" height="1.2" fill="#3a3c30"/>
<rect x="708" y="323" width="1.2" height="1.2" fill="#3a3c30"/>
<path d="M837.6 40.0 L837.6 50.1 L837.6 60.5 L837.6 70.9 L837.6 81.2 L837.6 91.5 L837.6 101.4 L837.6 111.0 L837.6 120.0 L837.6 128.3 L837.6 135.9 L837.6 143.1 L837.6 150.0 L837.5 156.9 L837.5 164.1 L837.4 171.7 L837.3 180.0 L837.2 189.3 L837.0 199.5 L836.8 210.3 L836.6 221.2 L836.4 232.1 L836.1 242.3 L835.8 251.8 L835.5 260.0 L835.2 267.0 L834.8 273.1 L834.4 278.5 L834.0 283.2 L833.5 287.6 L833.1 291.8 L832.5 295.8 L832.0 300.0 L831.4 304.2 L830.8 308.2 L830.1 312.1 L829.4 315.8 L828.7 319.2 L828.0 322.4 L827.2 325.3 L826.5 328.0 L825.8 330.3 L825.0 332.2 L824.3 333.8 L823.5 335.2 L822.8 336.5 L822.0 337.6 L821.2 338.8 L820.5 340.0 L819.8 341.2 L819.1 342.4 L818.3 343.5 L817.6 344.5 L816.9 345.5 L816.2 346.5 L815.5 347.5 L814.8 348.6" fill="none" stroke="#8483a3" stroke-width="5.6" />
<path d="M632.0 502.7 L635.6 501.8 L639.4 500.8 L643.1 499.8 L646.9 498.9 L650.5 497.9 L654.1 497.0 L657.5 496.1 L660.6 495.3 L663.5 494.5 L666.3 493.8 L668.9 493.2 L671.3 492.5 L673.7 491.9 L675.9 491.3 L678.0 490.7 L680.0 490.0 L681.7 489.4 L683.1 488.8 L684.3 488.3 L685.5 487.8 L686.7 487.2 L688.0 486.5 L689.7 485.6 L691.9 484.5 L694.6 483.2 L697.7 481.7 L701.2 480.0 L704.9 478.2 L708.6 476.3 L712.3 474.4 L715.8 472.5 L719.0 470.6 L721.9 468.7 L724.7 466.8 L727.5 464.9 L730.1 462.9 L732.6 460.9 L735.1 458.9 L737.6 457.0 L740.0 455.0 L742.4 453.1 L744.8 451.2 L747.1 449.3 L749.3 447.4 L751.5 445.5 L753.7 443.5 L755.9 441.5 L758.0 439.4 L760.1 437.2 L762.2 435.0 L764.3 432.6 L766.3 430.3 L768.3 427.9 L770.2 425.6 L772.1 423.2 L774.0 421.0 L775.8 418.8 L777.6 416.7 L779.4 414.5 L781.1 412.4 L782.8 410.3 L784.4 408.2 L785.9 406.2 L787.4 404.2 L788.8 402.2 L790.1 400.3 L791.3 398.4 L792.5 396.5 L793.7 394.7 L794.8 392.8 L795.9 390.9 L797.0 389.0 L798.1 387.0 L799.2 385.0 L800.2 383.0 L801.2 380.9 L802.2 378.9 L803.2 376.9 L804.1 374.9 L805.0 373.0 L805.9 371.1 L806.7 369.3 L807.5 367.4 L808.3 365.7 L809.0 363.9 L809.7 362.2 L810.4 360.6 L811.0 359.0 L811.6 357.5 L812.1 356.1 L812.6 354.8 L813.0 353.6 L813.5 352.3 L813.9 351.1 L814.3 349.9 L814.8 348.6" fill="none" stroke="#3c3cd2" stroke-width="5.4" />
<ellipse cx="820" cy="237" rx="62" ry="167" fill="none" stroke="#ff0000" stroke-width="4.6"/>
<!-- info panel graphics -->
<rect x="1160.5" y="47" width="1.6" height="140" fill="#1e1e70"/>
<rect x="1062" y="63" width="184" height="1.6" fill="#1e1e70" opacity="0.65"/>
<rect x="1163" y="171" width="42" height="12.6" fill="url(#gth)"/>
<rect x="1212" y="201" width="18" height="13" fill="url(#ggr)"/>
<rect x="1211.2" y="200.5" width="1.3" height="14" fill="#c83010"/>
<text x="1203.4" y="58.6" font-family="Liberation Serif, serif" font-weight="bold" font-size="11" fill="#1c1cc0" textLength="19" lengthAdjust="spacingAndGlyphs">trail</text>
<text x="1230" y="69" font-family="Liberation Mono, monospace" font-weight="bold" font-size="24" fill="#ffff1e" textLength="31" lengthAdjust="spacingAndGlyphs">27</text>
</g></svg></div>

<div id="title"><div id="ticon"></div><span id="ttext">AnalyzeForSpeed</span>
<div class="tb" style="left:1211px"><div style="left:4px;top:12px;width:7px;height:3px;background:#fff"></div></div>
<div class="tb" style="left:1234px"><div style="left:7px;top:4px;width:8px;height:7px;border:1px solid #fff;border-top-width:2px"></div><div style="left:4px;top:8px;width:8px;height:7px;border:1px solid #fff;border-top-width:2px;background:#2858d8"></div></div>
<div class="tb" style="left:1257px;background:linear-gradient(135deg,#e8805c 0%,#d84820 50%,#c03810 100%)"><svg width="19" height="19" style="position:absolute;left:0;top:0"><path d="M5 5 L14 14 M14 5 L5 14" stroke="#fff" stroke-width="2.2" stroke-linecap="round"/></svg></div>
</div>
<div id="menu"><span style="left:5px">File</span><span style="left:33px">Replay</span><span style="left:79px">Track Segment</span><span style="left:162px">View</span><span style="left:195px">Help</span></div>
<div style="left:0;top:47px;width:2px;height:928px;background:#ece9d8"></div>

<span class="lab" style="top:66px">Player</span>
<span class="val" style="top:66px">n1 Jaakko_M</span>
<span class="lab" style="top:81px">Car</span>
<span class="val" style="top:81px">BMW SAUBER</span>
<span class="lab" style="top:96px">Weather</span>
<span class="val" style="top:96px">Clear Day</span>
<span class="lab" style="top:111px">Sector 1</span>
<span class="num" style="top:111px">0:35.93</span>
<span class="lab" style="top:126px">Sector 2</span>
<span class="num" style="top:126px">0:51.94</span>
<span class="lab" style="top:141px">Sector 3</span>
<span class="num" style="top:141px">0:37.62</span>
<span class="lab" style="top:156px">Lap Time</span>
<span class="num" style="top:156px">2:05.49</span>
<span class="lab" style="top:171px">Throttle</span>
<span class="lab" style="top:186px">Brake</span>
<span class="lab" style="top:201px">Input Steer</span>
<span class="lab" style="top:216px">Clutch</span>
<span class="lab" style="top:231px">Handbrake</span>
<span class="lab" style="top:246px">Gear</span>
<span class="num" style="top:246px">3&nbsp;&nbsp;&nbsp;</span>
<span class="lab" style="top:261px">Speed (km/h)</span>
<span class="num" style="top:261px">135.84</span>
<span class="lab" style="top:276px">Track Distance (m)</span>
<span class="num" style="top:276px">4691.06</span>
<span class="lab" style="top:291px">Timing Diff (s)</span>
<span class="num" style="top:291px">0.00</span>
<span class="lab" style="top:306px">Longitudinal accel</span>
<span class="num" style="top:306px">-1.34</span>
<span class="lab" style="top:321px">Lateral accel (m/s^2)</span>
<span class="num" style="top:321px">27.99</span>
<span class="lab" style="top:336px">Yaw (deg)</span>
<span class="num" style="top:336px">2.57</span>
<span class="lab" style="top:366px">Track Segment:</span>
<span class="ctr" style="top:366px">Custom Segment</span>
<span class="lab" style="top:381px">Segment Time (s)</span>
<span class="num" style="top:381px">125.49</span>
<span class="lab" style="top:411px">Sync replay to:</span>
<span class="ctr" style="top:411px">Lap</span>
<span class="lab" style="top:426px">Time from sync (s)</span>
<span class="num" style="top:426px">67.22</span>
<span class="lab" style="top:441px">Entrance speed</span>
<span class="num" style="top:441px">297.06</span>
<span class="lab" style="top:456px">Exit speed</span>
<span class="num" style="top:456px">298.44</span>
<span class="lab" style="top:471px">HLVC</span>
<span class="val" style="top:471px">Legal lap</span>

<div id="vs"><div class="sb" style="left:1px;top:1.5px;width:16px;height:16px"><svg width="14" height="14" style="position:absolute;left:0;top:0"><path d="M3.5 8.5 L7 5 L10.5 8.5" fill="none" stroke="#4d6185" stroke-width="2"/></svg></div>
<div class="sb" style="left:1px;top:783px;width:15.5px;height:79.5px"><div style="left:3px;top:33px;width:7px;height:1px;background:#eef4fe;box-shadow:0 2px 0 #eef4fe,0 4px 0 #eef4fe,0 6px 0 #eef4fe"></div></div>
<div class="sb" style="left:1px;top:892.8px;width:16px;height:16px"><svg width="14" height="14" style="position:absolute;left:0;top:0"><path d="M3.5 5.5 L7 9 L10.5 5.5" fill="none" stroke="#4d6185" stroke-width="2"/></svg></div></div>
<div id="hs"><div class="sb" style="left:0px;top:1.2px;width:16px;height:15.3px"><svg width="14" height="13" style="position:absolute;left:0;top:0"><path d="M8.5 3 L5 6.5 L8.5 10" fill="none" stroke="#4d6185" stroke-width="2"/></svg></div>
<div class="sb" style="left:1027px;top:1px;width:156px;height:15.6px"><div style="left:72px;top:3px;width:1px;height:7px;background:#eef4fe;box-shadow:2px 0 0 #eef4fe,4px 0 0 #eef4fe,6px 0 0 #eef4fe"></div></div>
<div class="sb" style="left:1242.2px;top:1.2px;width:16px;height:15.3px"><svg width="14" height="13" style="position:absolute;left:0;top:0"><path d="M5 3 L8.5 6.5 L5 10" fill="none" stroke="#4d6185" stroke-width="2"/></svg></div></div>
<div style="left:1261px;top:957px;width:19px;height:18px;background:#ece9d8"></div>
<div style="left:1278px;top:47px;width:2px;height:928px;background:#ece9d8"></div>
<div id="status"><span style="left:1.5px;top:5px;font-size:11px;letter-spacing:-0.3px">Ready</span>
<div class="pane" style="left:1191px;width:26px"></div><div class="pane" style="left:1219px;width:28px"><span style="left:1px;top:1px;font-size:11px;letter-spacing:-0.9px">NUM</span></div><div class="pane" style="left:1249px;width:31px"></div></div>
<div id="task">
<div id="start"><svg width="30" height="30" style="position:absolute;left:6px;top:0"><g transform="skewX(-8)"><rect x="9" y="6" width="7" height="7" rx="1.5" fill="#e8502c"/><rect x="17.5" y="7.5" width="7" height="7" rx="1.5" fill="#7cc83c"/><rect x="8" y="14.5" width="7" height="7" rx="1.5" fill="#4a8cf0"/><rect x="16.5" y="16" width="7" height="7" rx="1.5" fill="#f4c828"/></g></svg><span>start</span></div>
<div class="tbtn" style="left:107px;width:158px"><svg width="20" height="18" style="position:absolute;left:9px;top:3px"><ellipse cx="8" cy="9.5" rx="4.6" ry="6" fill="none" stroke="#7c86a8" stroke-width="2.6" opacity=".55" transform="rotate(-8 8 9.5)"/><ellipse cx="10.5" cy="8.5" rx="4.3" ry="5.6" fill="#f4e8e8" stroke="#d8181c" stroke-width="3.6" transform="rotate(-8 10.5 8.5)"/></svg><span style="left:29px">Transfers - Opera</span></div>
<div class="tbtn" style="left:266px;width:160px;background:linear-gradient(to bottom,#1a48b8 0%,#1e52c4 20%,#2058cc 100%);box-shadow:0 0 0 1px #143c9c inset"><svg width="20" height="20" style="position:absolute;left:10px;top:1px"><rect x="6" y="2" width="8" height="8" fill="#e04830"/><rect x="1" y="10" width="8" height="8" fill="#38a848"/><rect x="10" y="10" width="8" height="8" fill="#4878e0"/><rect x="8" y="4" width="4" height="4" fill="#f8e060"/><rect x="3" y="12" width="4" height="4" fill="#d8f0d0"/><rect x="12" y="12" width="4" height="4" fill="#d0e0f8"/></svg><span style="left:31px">AnalyzeForSpeed</span></div>
<div class="tbtn" style="left:427.5px;width:158px"><svg width="18" height="20" style="position:absolute;left:9px;top:1px"><path d="M3 6 L13 6 L11 18 L5 18 Z" fill="#c8b890" stroke="#806838" stroke-width="1"/><path d="M5 1 L6.5 9 M8 0 L8 9 M11 1 L9.5 9" stroke="#d84020" stroke-width="1.6"/><path d="M8 0 L8 9" stroke="#e8c020" stroke-width="1.6"/></svg><span style="left:27px">trail1.JPG - Paint</span></div>
<div id="tray"><svg width="75" height="30" style="position:absolute;left:-9px;top:0;overflow:visible"><circle cx="9.5" cy="15.5" r="8" fill="#2a7cf0" stroke="#9cc8ff" stroke-width="1"/><path d="M11.5 11.5 L7.5 15.5 L11.5 19.5" fill="none" stroke="#fff" stroke-width="2.2"/><circle cx="27.5" cy="11" r="3.6" fill="#8cd848"/><path d="M21.5 22 Q21.5 14.5 27.5 14.5 Q33.5 14.5 33.5 22 Z" fill="#6cc030"/></svg><span style="left:33px;top:9px;color:#fff;font-size:11px">22:24</span></div>
</div>
</body></html>
